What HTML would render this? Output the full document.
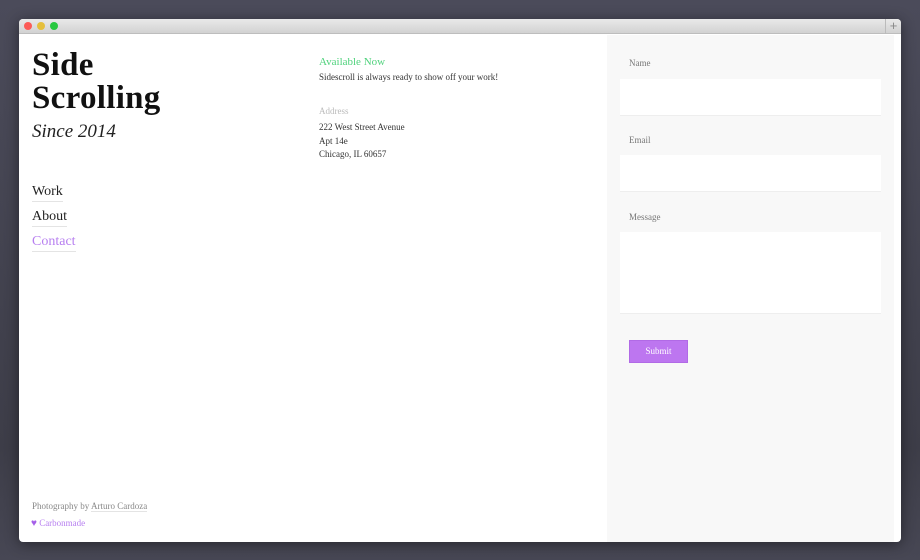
<!DOCTYPE html>
<html><head><style>
*{margin:0;padding:0;box-sizing:border-box}
body{width:920px;height:560px;overflow:hidden;background:linear-gradient(#4b4b5a,#3d3d48 80%,#474754);font-family:"Liberation Serif",serif;position:relative}
.win{position:absolute;left:19px;top:19px;width:882px;height:523px;background:#fff;border-radius:4px;overflow:hidden;box-shadow:0 2px 14px rgba(0,0,0,.45)}
.bar{height:15px;background:linear-gradient(#e9e9e9,#d2d2d2);border-bottom:1px solid #bdbdbd;position:relative}
.dot{position:absolute;top:3px;width:8px;height:8px;border-radius:50%}
.plus{position:absolute;right:0;top:0;width:16px;height:15px;border-left:1px solid #bbb;color:#888;font:13px/14px "Liberation Sans",sans-serif;text-align:center}
.t{position:absolute;white-space:nowrap}
h1{position:absolute;left:13px;top:30px;font-size:33px;line-height:33px;font-weight:bold;color:#111;letter-spacing:.3px}
.nav{position:absolute;left:13px;font-size:14px;color:#222;border-bottom:1px solid #e4e4e4;line-height:18px}
.panel{position:absolute;left:588px;top:16px;width:287px;height:507px;background:#f8f8f8}
.lab{position:absolute;left:22px;font-size:9px;color:#777}
.inp{position:absolute;left:13px;width:261px;background:#fff;border-bottom:1px solid #eee}
.sm{font-size:9px;color:#333}
</style></head><body>
<div class="win">
 <div class="bar">
  <div class="dot" style="left:5px;background:#fc5b57"></div>
  <div class="dot" style="left:18px;background:#e5bf3c"></div>
  <div class="dot" style="left:31px;background:#28c840"></div>
  <div class="plus">+</div>
 </div>
 <h1>Side<br>Scrolling</h1>
 <div class="t" style="left:13px;top:102px;font-size:19px;font-style:italic;color:#222">Since 2014</div>
 <div class="nav" style="top:164px">Work</div>
 <div class="nav" style="top:189px">About</div>
 <div class="nav" style="top:214px;color:#b77ff0">Contact</div>
 <div class="t" style="left:300px;top:37px;font-size:11px;color:#4fd27c">Available Now</div>
 <div class="t sm" style="left:300px;top:53px">Sidescroll is always ready to show off your work!</div>
 <div class="t" style="left:300px;top:87px;font-size:9px;color:#bbb">Address</div>
 <div class="t sm" style="left:300px;top:102px;line-height:13.5px">222 West Street Avenue<br>Apt 14e<br>Chicago, IL 60657</div>
 <div class="t" style="left:13px;top:482px;font-size:9px;color:#888">Photography by <span style="border-bottom:1px solid #e4e4e4">Arturo Cardoza</span></div>
 <div class="t" style="left:12px;top:499px;font-size:9px;color:#b77ff0"><span style="font-size:10px;color:#a55fe8">&#9829;</span> Carbonmade</div>
 <div class="panel">
  <div class="lab" style="top:23px">Name</div>
  <div class="inp" style="top:44px;height:37px"></div>
  <div class="lab" style="top:100px">Email</div>
  <div class="inp" style="top:120px;height:37px"></div>
  <div class="lab" style="top:177px">Message</div>
  <div class="inp" style="top:197px;height:82px"></div>
  <div style="position:absolute;left:22px;top:305px;width:59px;height:23px;background:#bd76f0;border:1px solid #b16ae6;color:#fff;font-size:9px;text-align:center;line-height:21px">Submit</div>
 </div>
</div>
</body></html>
